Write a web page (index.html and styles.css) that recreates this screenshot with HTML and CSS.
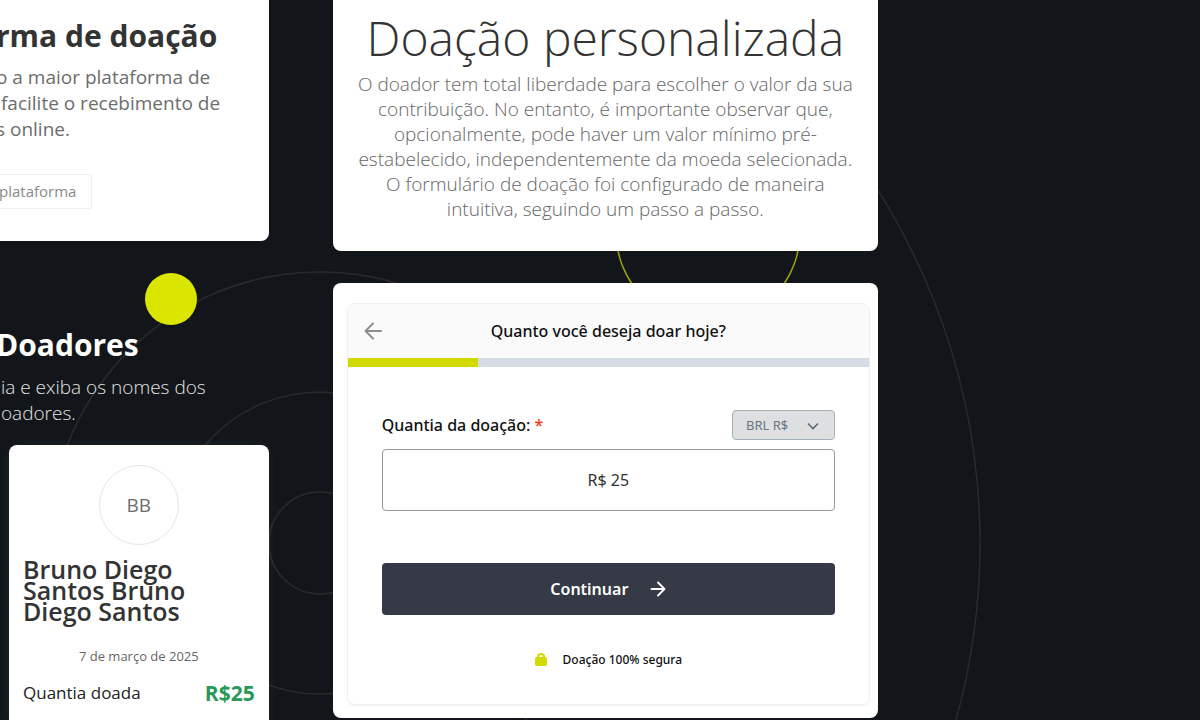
FILE: index.html
```html
<!DOCTYPE html>
<html lang="pt-BR">
<head>
    <meta charset="UTF-8">
    <meta name="viewport" content="width=device-width, initial-scale=1">
    <title>Doação personalizada</title>
    <link rel="stylesheet" href="styles.css">
</head>
<body>
<svg class="orbits" width="1200" height="720" viewBox="0 0 1200 720" aria-hidden="true">
    <g fill="none" stroke="#282a2d" stroke-width="1.500">
        <circle cx="320" cy="543" r="51"/>
        <circle cx="320" cy="543" r="151"/>
        <circle cx="320" cy="543" r="271"/>
        <circle cx="320" cy="543" r="660"/>
    </g>
    <circle cx="708" cy="232" r="92" fill="none" stroke="#9ba10c" stroke-width="1.500"/>
    <circle cx="171" cy="299" r="26" fill="#dbe600"/>
</svg>
<main class="page">
    <div class="side">
        <section class="card intro">
            <h2>rma de doação</h2>
            <p>o a maior plataforma de<br>&nbsp;facilite o recebimento de<br>s online.</p>
            <a class="more" href="#">plataforma</a>
        </section>
        <section class="donors">
            <h2>Doadores</h2>
            <p>&nbsp;ia e exiba os nomes dos<br>&nbsp;oadores.</p>
            <article class="card donor">
                <div class="avatar">BB</div>
                <h3>Bruno Diego Santos Bruno Diego Santos</h3>
                <time datetime="2025-03-07">7 de março de 2025</time>
                <div class="amount"><span>Quantia doada</span><strong>R$25</strong></div>
            </article>
        </section>
    </div>
    <div class="content">
        <section class="card custom">
            <h1>Doação personalizada</h1>
            <p>O doador tem total liberdade para escolher o valor da sua contribuição. No entanto, é importante observar que, opcionalmente, pode haver um valor mínimo pré-estabelecido, independentemente da moeda selecionada. O formulário de doação foi configurado de maneira intuitiva, seguindo um passo a passo.</p>
        </section>
        <section class="card widget">
            <form class="form">
                <header class="form-head">
                    <button class="back" type="button" aria-label="Voltar">
                        <svg width="18" height="18" viewBox="0 0 18 18"><path d="M17 9H2M9 1.500L1.500 9L9 16.500" fill="none" stroke="#8f8f8f" stroke-width="2" stroke-linecap="round" stroke-linejoin="round"/></svg>
                    </button>
                    <h2>Quanto você deseja doar hoje?</h2>
                </header>
                <div class="progress"><div class="bar"></div></div>
                <div class="fields">
                    <div class="row">
                        <label for="amount">Quantia da doação: <span class="req">*</span></label>
                        <div class="currency">
                            <select aria-label="Moeda"><option>BRL R$</option></select>
                            <svg width="12" height="8" viewBox="0 0 12 8"><path d="M1 1.500L6 6.500L11 1.500" fill="none" stroke="#5c6b78" stroke-width="1.600"/></svg>
                        </div>
                    </div>
                    <input class="value" id="amount" type="text" value="R$ 25">
                    <button class="submit" type="submit">
                        Continuar
                        <svg width="16" height="16" viewBox="0 0 16 16"><path d="M1.500 8H14M8 1.500L14.500 8L8 14.500" fill="none" stroke="#fff" stroke-width="1.800" stroke-linecap="round" stroke-linejoin="round"/></svg>
                    </button>
                    <div class="secure">
                        <svg width="12" height="14" viewBox="0 0 12 14"><rect y="4" width="12" height="9" rx="2" fill="#d3da00"/><path d="M3 5V4a3 3 0 0 1 6 0V5" fill="none" stroke="#d3da00" stroke-width="2"/></svg>
                        <span>Doação 100% segura</span>
                    </div>
                </div>
            </form>
        </section>
    </div>
</main>
</body>
</html>
```
FILE: styles.css
```css
* {
    box-sizing: border-box;
    margin: 0;
    padding: 0;
}

body {
    position: relative;
    height: 100vh;
    overflow: hidden;
    background: #12161a;
    color: #333;
    font-family: "Open Sans", "Noto Sans", sans-serif;
}

.orbits {
    position: absolute;
    top: 0;
    left: 0;
}

.page {
    position: relative;
    display: grid;
    grid-template-columns: 1fr 2fr;
    align-items: start;
    gap: 64px;
    margin: 0 322px 0 -4px;
}

.card {
    background: #fff;
    border-radius: 8px;
}

/* left column */
.intro {
    height: 241px;
    padding-top: 14px;
    border-radius: 0 0 8px 0;
}

.side h2 {
    font-size: 30px;
    line-height: 44px;
    font-weight: 700;
}

.side p {
    font-size: 19px;
    line-height: 26px;
    white-space: nowrap;
}

.intro p {
    margin: 6px 0 32px;
    color: #6d6d6d;
}

.more {
    display: inline-block;
    padding: 0 15px 0 2px;
    border: 1px solid #f0f0f0;
    border-radius: 3px;
    color: #8a8a8a;
    font-size: 15px;
    line-height: 33px;
    text-decoration: none;
}

.donors {
    padding-top: 82px;
    color: #fff;
}

.donors p {
    margin: 7px 0 19px;
    color: #e4e4e4;
    font-weight: 300;
}

.donor {
    display: flex;
    flex-direction: column;
    margin-left: 13px;
    padding: 20px 14px 24px;
    box-shadow: 0 0 12px rgba(255, 255, 255, .06);
}

.avatar {
    align-self: center;
    width: 80px;
    height: 80px;
    border: 1px solid #e6e6e6;
    border-radius: 50%;
    color: #6d6d6d;
    font-size: 19px;
    line-height: 78px;
    text-align: center;
}

.donor h3 {
    margin-top: 14px;
    padding-right: 30px;
    color: #333;
    font-size: 25px;
    line-height: 21px;
    font-weight: 600;
}

.donor time {
    margin: 25px 0 16px;
    color: #666;
    font-size: 13px;
    line-height: 18px;
    text-align: center;
}

.amount {
    display: flex;
    align-items: center;
    justify-content: space-between;
    color: #222;
    font-size: 17px;
    line-height: 24px;
}

.amount strong {
    color: #289a55;
    font-size: 21px;
}

/* right column */
.content {
    display: grid;
    gap: 32px;
}

.custom {
    height: 251px;
    padding: 4px 20px 0;
    border-top-left-radius: 0;
    border-top-right-radius: 0;
    text-align: center;
}

.custom h1 {
    font-size: 48px;
    line-height: 67px;
    font-weight: 300;
}

.custom p {
    margin-top: 1px;
    color: #666;
    font-size: 19px;
    line-height: 25px;
    font-weight: 300;
}

.widget {
    padding: 20px 8px 13px 14px;
}

.form {
    overflow: hidden;
    border: 1px solid #f0f0f0;
    border-radius: 8px;
    box-shadow: 0 1px 2px rgba(0, 0, 0, .06);
    color: #111;
    font-family: "Noto Sans", "Open Sans", sans-serif;
}

.form-head {
    display: grid;
    grid-template-columns: 18px 1fr 18px;
    align-items: center;
    height: 54px;
    padding: 0 16px;
    background: #fafafa;
}

.form-head h2 {
    font-size: 16px;
    font-weight: 500;
    text-align: center;
}

.back {
    height: 18px;
    border: 0;
    background: none;
}

.progress {
    height: 9px;
    background: #d5dce3;
}

.bar {
    width: 25%;
    height: 100%;
    background: #d3da00;
}

.fields {
    padding: 43px 34px 35px;
}

.row {
    display: flex;
    align-items: center;
    justify-content: space-between;
}

.row label {
    font-size: 16px;
    font-weight: 500;
}

.req {
    color: #f0391c;
}

.currency {
    position: relative;
}

.currency select {
    width: 103px;
    height: 30px;
    padding: 0 13px;
    appearance: none;
    border: 1px solid #a4b0bb;
    border-radius: 4px;
    background: #dedfe0;
    color: #6a7782;
    font-family: inherit;
    font-size: 13px;
}

.currency svg {
    position: absolute;
    top: 12px;
    right: 16px;
    pointer-events: none;
}

.value {
    display: block;
    width: 100%;
    height: 62px;
    margin: 9px 0 52px;
    border: 1px solid #999;
    border-radius: 4px;
    color: #333;
    font-family: inherit;
    font-size: 16px;
    text-align: center;
}

.submit {
    display: flex;
    align-items: center;
    justify-content: center;
    gap: 22px;
    width: 100%;
    height: 52px;
    border: 0;
    border-radius: 4px;
    background: #353a46;
    color: #fff;
    font-family: inherit;
    font-size: 16px;
    font-weight: 600;
}

.secure {
    display: flex;
    align-items: center;
    justify-content: center;
    gap: 16px;
    margin-top: 36px;
    font-size: 12px;
    line-height: 18px;
    font-weight: 500;
}
```
